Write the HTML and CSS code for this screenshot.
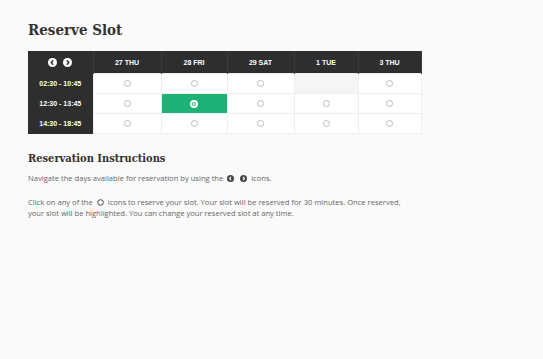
FILE: index.html
```html
<!DOCTYPE html>
<html lang="en">
<head>
  <meta charset="UTF-8" />
  <title>Reserve Slot</title>
  <link rel="stylesheet" href="styles.css">
</head>
<body>

<div class="page">
  <h1>Reserve Slot</h1>

  <table class="slots">
    <colgroup>
      <col class="c0"><col class="c1"><col class="c2"><col class="c3"><col class="c4"><col class="c5">
    </colgroup>
    <tr class="head">
      <th class="nav">
        <span class="arrow"><svg viewBox="0 0 10 10"><circle cx="5" cy="5" r="5" fill="#fff"/><path d="M5.8 2.6 L3.6 5 L5.8 7.4" stroke="#333" stroke-width="1.6" fill="none"/></svg></span>
        <span class="arrow"><svg viewBox="0 0 10 10"><circle cx="5" cy="5" r="5" fill="#fff"/><path d="M4.2 2.6 L6.4 5 L4.2 7.4" stroke="#333" stroke-width="1.6" fill="none"/></svg></span>
      </th>
      <th>27 THU</th>
      <th>28 FRI</th>
      <th>29 SAT</th>
      <th>1 TUE</th>
      <th>3 THU</th>
    </tr>
    <tr>
      <th class="time">02:30 - 10:45</th>
      <td><span class="dot"></span></td>
      <td><span class="dot"></span></td>
      <td><span class="dot"></span></td>
      <td class="off"></td>
      <td><span class="dot"></span></td>
    </tr>
    <tr>
      <th class="time">12:30 - 13:45</th>
      <td><span class="dot"></span></td>
      <td class="picked"><span class="dot"></span></td>
      <td><span class="dot"></span></td>
      <td><span class="dot"></span></td>
      <td><span class="dot"></span></td>
    </tr>
    <tr>
      <th class="time">14:30 - 18:45</th>
      <td><span class="dot"></span></td>
      <td><span class="dot"></span></td>
      <td><span class="dot"></span></td>
      <td><span class="dot"></span></td>
      <td><span class="dot"></span></td>
    </tr>
  </table>

  <h2>Reservation Instructions</h2>
  <p>Navigate the days available for reservation by using the
    <span class="mini"><svg viewBox="0 0 10 10"><circle cx="5" cy="5" r="5" fill="#444"/><path d="M5.8 2.6 L3.6 5 L5.8 7.4" stroke="#fff" stroke-width="1.6" fill="none"/></svg></span>
    <span class="mini"><svg viewBox="0 0 10 10"><circle cx="5" cy="5" r="5" fill="#444"/><path d="M4.2 2.6 L6.4 5 L4.2 7.4" stroke="#fff" stroke-width="1.6" fill="none"/></svg></span>
    icons.</p>
  <p class="click">Click on any of the <span class="mini"><svg viewBox="0 0 10 10"><circle cx="5" cy="5" r="4" fill="none" stroke="#444" stroke-width="1.4"/></svg></span> icons to reserve your slot. Your slot will be reserved for 30 minutes. Once reserved, your slot will be highlighted. You can change your reserved slot at any time.</p>
</div>

</body>
</html>
```

FILE: styles.css
```css
body {
  margin: 0;
  background: #fafafa;
  font-family: "Open Sans", sans-serif;
}

.page {
  padding: 20px 28px;
}

h1 {
  font-family: "DejaVu Serif Condensed", "DejaVu Serif", serif;
  font-weight: bold;
  font-size: 15px;
  line-height: 20px;
  color: #333;
  margin: 0 0 11px;
}

.slots {
  border-collapse: collapse;
  table-layout: fixed;
  width: 393px;
  font-family: "Liberation Sans", Arial, sans-serif;
  font-size: 7px;
  font-weight: bold;
  background: #fff;
}

.slots col.c0 { width: 65px; }
.slots col.c1 { width: 68px; }
.slots col.c2 { width: 66px; }
.slots col.c3 { width: 67px; }
.slots col.c4 { width: 64px; }
.slots col.c5 { width: 63px; }

.slots th {
  background: #2e2e2e;
  color: #fff;
  border-right: 1px solid #3a3a3a;
  height: 22px;
  padding: 0;
}

.slots th.time {
  height: 19px;
  border-right: none;
}

.slots td {
  height: 19px;
  padding: 0;
  text-align: center;
  border: 1px solid #eee;
  line-height: 0;
}

.slots td.off {
  background: #f5f5f5;
}

.slots td.picked {
  background: #1db377;
}

.arrow {
  display: inline-block;
  width: 9px;
  height: 9px;
  margin: 0 2px;
  vertical-align: middle;
}

.arrow svg, .mini svg {
  display: block;
  width: 100%;
  height: 100%;
}

.dot {
  display: inline-block;
  width: 5px;
  height: 5px;
  border: 1px solid #bbb;
  border-radius: 50%;
}

.picked .dot {
  width: 4px;
  height: 4px;
  border: 2px solid #fff;
  background: #1db377;
  box-shadow: inset 0 0 0 1px #1db377, inset 0 0 0 4px #fff;
}

h2 {
  font-family: "DejaVu Serif Condensed", "DejaVu Serif", serif;
  font-weight: bold;
  font-size: 11px;
  line-height: 16px;
  color: #333;
  margin: 17px 0 6px;
}

p {
  width: 380px;
  font-size: 7.6px;
  line-height: 11px;
  color: #666;
  margin: 0 0 13px;
}

.mini {
  display: inline-block;
  width: 7px;
  height: 7px;
  margin: 0 2px;
  vertical-align: -1px;
}
```
